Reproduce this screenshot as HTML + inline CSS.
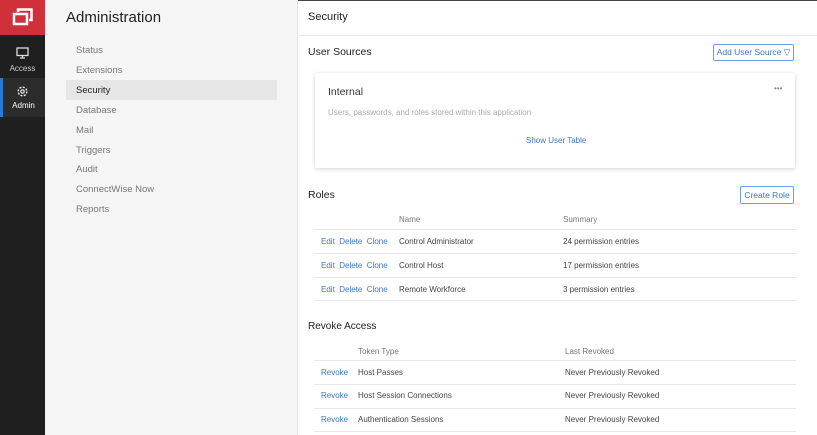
<!DOCTYPE html>
<html><head><style>
*{margin:0;padding:0;box-sizing:border-box}
body{width:817px;height:435px;overflow:hidden;font-family:"Liberation Sans",sans-serif;background:#fff;position:relative;color:#333}
.a{position:absolute;white-space:nowrap}
.rail{left:0;top:0;width:45px;height:435px;background:#1f1f1f}
.nav{left:45px;top:0;width:253px;height:435px;background:#f5f5f5;border-right:1px solid #e6e6e6}
.nl{font-size:9.5px;color:#777;left:76px}
.lk{color:#3a78c9;font-size:8px}
.t{font-size:8px;color:#444}
.h{font-size:8px;color:#777}
.line{height:1px;background:#e8e8e8;left:314px;width:482px}
.btn{border:1px solid #6f9fdc;border-radius:2px;color:#3a78c9;font-size:8.5px;text-align:center;background:#fff}
</style></head><body>
<div class="a" style="left:0;top:0;width:817px;height:1px;background:#444"></div>
<div class="a rail"></div>
<div class="a" style="left:0;top:0;width:45px;height:35px;background:#d0303a"></div>
<svg class="a" style="left:12px;top:7px" width="22" height="20" viewBox="0 0 22 20"><rect x="2" y="7" width="13" height="10" fill="none" stroke="#fff" stroke-width="2.5"/><path d="M6 5V2.5H19.5V13H17" fill="none" stroke="#fff" stroke-width="2.5"/></svg>
<svg class="a" style="left:16px;top:47px" width="13" height="12" viewBox="0 0 13 12"><rect x="1" y="1" width="11" height="7.5" fill="none" stroke="#ddd" stroke-width="1.3"/><path d="M6.5 8.5V11M4 11H9" stroke="#ddd" stroke-width="1.3"/></svg>
<div class="a" style="left:0;width:45px;top:64px;text-align:center;font-size:8px;color:#ccc">Access</div>
<div class="a" style="left:0;top:78px;width:45px;height:39px;background:#2c2c2c;border-left:3px solid #2a7ad8"></div>
<svg class="a" style="left:16px;top:85px" width="13" height="13" viewBox="0 0 13 13"><circle cx="6.5" cy="6.5" r="4.3" fill="none" stroke="#eee" stroke-width="1.4" stroke-dasharray="2 1.4"/><circle cx="6.5" cy="6.5" r="1.7" fill="none" stroke="#eee" stroke-width="1.2"/></svg>
<div class="a" style="left:1px;width:45px;top:101px;text-align:center;font-size:8px;color:#fff">Admin</div>
<div class="a nav"></div>
<div class="a" style="left:66px;top:9px;font-size:15px;color:#222">Administration</div>
<div class="a" style="left:66px;top:80px;width:211px;height:20px;background:#e6e6e6"></div>
<div class="a nl" style="top:45px">Status</div>
<div class="a nl" style="top:65px">Extensions</div>
<div class="a nl" style="top:85px;color:#222">Security</div>
<div class="a nl" style="top:105px">Database</div>
<div class="a nl" style="top:125px">Mail</div>
<div class="a nl" style="top:145px">Triggers</div>
<div class="a nl" style="top:164px">Audit</div>
<div class="a nl" style="top:184px">ConnectWise Now</div>
<div class="a nl" style="top:204px">Reports</div>

<div class="a" style="left:308px;top:11px;font-size:11px;color:#222">Security</div>
<div class="a" style="left:299px;top:35px;width:518px;height:1px;background:#e8e8e8"></div>
<div class="a" style="left:308px;top:46px;font-size:10.5px;color:#222">User Sources</div>
<div class="a btn" style="left:713px;top:44px;width:81px;height:17px;line-height:15px">Add User Source ▽</div>
<div class="a" style="left:315px;top:73px;width:480px;height:95px;background:#fff;box-shadow:0 1px 4px rgba(0,0,0,.18)"></div>
<div class="a" style="left:328px;top:86px;font-size:10.5px;color:#333">Internal</div>
<div class="a" style="left:774px;top:84px;font-size:8px;color:#888">•••</div>
<div class="a" style="left:328px;top:108px;font-size:8px;color:#aaa">Users, passwords, and roles stored within this application</div>
<div class="a" style="left:526px;top:136px;font-size:8px;color:#3a78c9">Show User Table</div>
<div class="a" style="left:308px;top:189px;font-size:10.5px;color:#222">Roles</div>
<div class="a btn" style="left:740px;top:186px;width:54px;height:18px;line-height:16px">Create Role</div>
<div class="a h" style="left:399px;top:215px">Name</div>
<div class="a h" style="left:563px;top:215px">Summary</div>
<div class="a line" style="top:229px"></div>
<div class="a lk" style="left:321px;top:237px">Edit&nbsp;&nbsp;Delete&nbsp;&nbsp;Clone</div><div class="a t" style="left:399px;top:237px">Control Administrator</div><div class="a t" style="left:563px;top:237px">24 permission entries</div>
<div class="a line" style="top:253px"></div>
<div class="a lk" style="left:321px;top:261px">Edit&nbsp;&nbsp;Delete&nbsp;&nbsp;Clone</div><div class="a t" style="left:399px;top:261px">Control Host</div><div class="a t" style="left:563px;top:261px">17 permission entries</div>
<div class="a line" style="top:277px"></div>
<div class="a lk" style="left:321px;top:285px">Edit&nbsp;&nbsp;Delete&nbsp;&nbsp;Clone</div><div class="a t" style="left:399px;top:285px">Remote Workforce</div><div class="a t" style="left:563px;top:285px">3 permission entries</div>
<div class="a line" style="top:300px"></div>
<div class="a" style="left:308px;top:321px;font-size:10px;color:#222">Revoke Access</div>
<div class="a h" style="left:358px;top:347px">Token Type</div>
<div class="a h" style="left:565px;top:347px">Last Revoked</div>
<div class="a line" style="top:360px"></div>
<div class="a lk" style="left:321px;top:368px">Revoke</div><div class="a t" style="left:358px;top:368px">Host Passes</div><div class="a t" style="left:565px;top:368px">Never Previously Revoked</div>
<div class="a line" style="top:384px"></div>
<div class="a lk" style="left:321px;top:391px">Revoke</div><div class="a t" style="left:358px;top:391px">Host Session Connections</div><div class="a t" style="left:565px;top:391px">Never Previously Revoked</div>
<div class="a line" style="top:408px"></div>
<div class="a lk" style="left:321px;top:415px">Revoke</div><div class="a t" style="left:358px;top:415px">Authentication Sessions</div><div class="a t" style="left:565px;top:415px">Never Previously Revoked</div>
<div class="a line" style="top:431px"></div>
</body></html>
